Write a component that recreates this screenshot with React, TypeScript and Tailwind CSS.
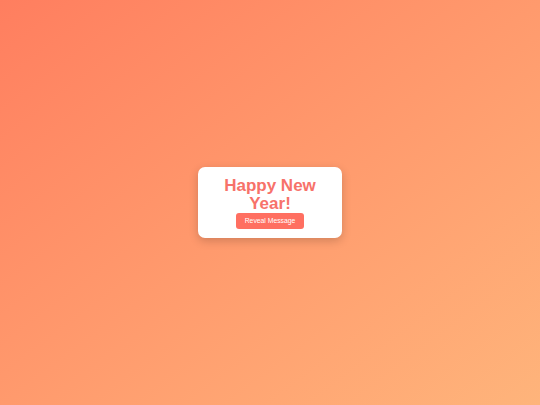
export default function App() {
  return (
    <div
      className="flex h-[405px] w-full items-center justify-center bg-gradient-to-br from-[#ff7e5f] to-[#feb47b]"
      style={{ fontFamily: '"Liberation Sans", Arial, sans-serif' }}
    >
      <div className="flex w-[144px] flex-col items-center rounded-[7px] bg-white px-[13px] pt-[10px] pb-[9px] shadow-[0_3px_10px_rgba(0,0,0,0.18)]">
        <h1 className="text-center text-[17px] font-bold leading-[18px] text-[#f7726a]">
          Happy New Year!
        </h1>
        <button className="h-[16px] w-[68px] rounded-[3px] bg-[#ff6f61] text-[6.8px] leading-none text-white">
          Reveal Message
        </button>
      </div>
    </div>
  )
}
